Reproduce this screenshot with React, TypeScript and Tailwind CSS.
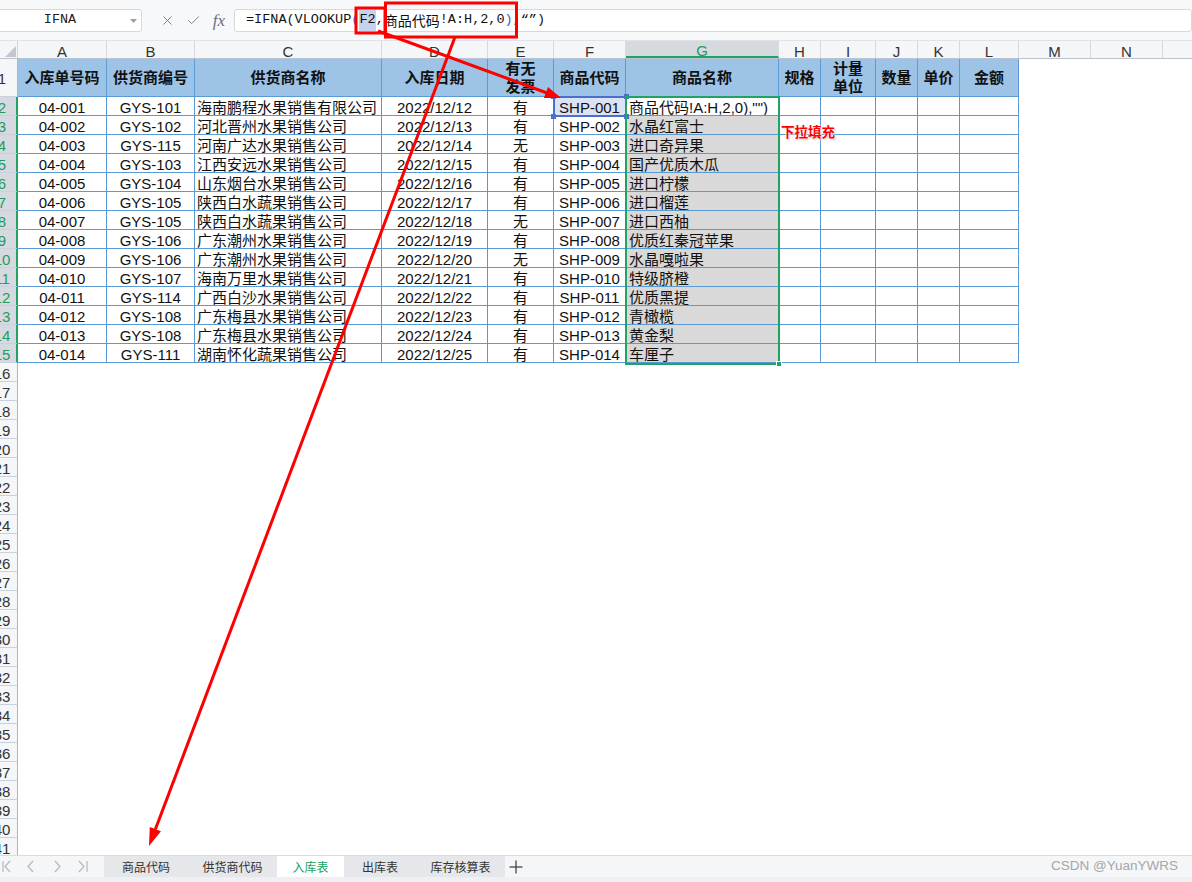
import React from 'react';
import { X, Check } from 'lucide-react';

type Col = { k: string; w: string };

const tableCols: Col[] = [
  { k: 'A', w: 'w-[89px]' },
  { k: 'B', w: 'w-[88px]' },
  { k: 'C', w: 'w-[187px]' },
  { k: 'D', w: 'w-[106px]' },
  { k: 'E', w: 'w-[66px]' },
  { k: 'F', w: 'w-[72px]' },
  { k: 'G', w: 'w-[153px]' },
  { k: 'H', w: 'w-[42px]' },
  { k: 'I', w: 'w-[55px]' },
  { k: 'J', w: 'w-[42px]' },
  { k: 'K', w: 'w-[42px]' },
  { k: 'L', w: 'w-[59px]' },
];
const extraCols: Col[] = [
  { k: 'M', w: 'w-[72px]' },
  { k: 'N', w: 'w-[72px]' },
  { k: '', w: 'w-[40px]' },
];

const headers = ['入库单号码', '供货商编号', '供货商名称', '入库日期', '有无\n发票', '商品代码', '商品名称', '规格', '计量\n单位', '数量', '单价', '金额'];

const rows: string[][] = [
  ['04-001', 'GYS-101', '海南鹏程水果销售有限公司', '2022/12/12', '有', 'SHP-001', '商品代码!A:H,2,0),"")'],
  ['04-002', 'GYS-102', '河北晋州水果销售公司', '2022/12/13', '有', 'SHP-002', '水晶红富士'],
  ['04-003', 'GYS-115', '河南广达水果销售公司', '2022/12/14', '无', 'SHP-003', '进口奇异果'],
  ['04-004', 'GYS-103', '江西安远水果销售公司', '2022/12/15', '有', 'SHP-004', '国产优质木瓜'],
  ['04-005', 'GYS-104', '山东烟台水果销售公司', '2022/12/16', '有', 'SHP-005', '进口柠檬'],
  ['04-006', 'GYS-105', '陕西白水蔬果销售公司', '2022/12/17', '有', 'SHP-006', '进口榴莲'],
  ['04-007', 'GYS-105', '陕西白水蔬果销售公司', '2022/12/18', '无', 'SHP-007', '进口西柚'],
  ['04-008', 'GYS-106', '广东潮州水果销售公司', '2022/12/19', '有', 'SHP-008', '优质红秦冠苹果'],
  ['04-009', 'GYS-106', '广东潮州水果销售公司', '2022/12/20', '无', 'SHP-009', '水晶嘎啦果'],
  ['04-010', 'GYS-107', '海南万里水果销售公司', '2022/12/21', '有', 'SHP-010', '特级脐橙'],
  ['04-011', 'GYS-114', '广西白沙水果销售公司', '2022/12/22', '有', 'SHP-011', '优质黑提'],
  ['04-012', 'GYS-108', '广东梅县水果销售公司', '2022/12/23', '有', 'SHP-012', '青橄榄'],
  ['04-013', 'GYS-108', '广东梅县水果销售公司', '2022/12/24', '有', 'SHP-013', '黄金梨'],
  ['04-014', 'GYS-111', '湖南怀化蔬果销售公司', '2022/12/25', '有', 'SHP-014', '车厘子'],
];

const emptyRows = Array.from({ length: 26 }, (_, i) => i + 16);

function RowHead({ n, sel }: { n: number; sel?: boolean }) {
  return (
    <div
      className={`w-[18px] shrink-0 h-full overflow-hidden flex items-center pt-[2px] border-b border-b-[#c9d1dc] ${
        sel
          ? 'bg-[#d6dae0] text-[#1c9d5d] border-r-2 border-r-[#21a366]'
          : 'bg-[#f5f6f8] text-[#333] border-r border-r-[#aab6c7]'
      }`}
    >
      <div className="w-[32px] shrink-0 -ml-[14px] text-center text-[15px] leading-none">{n}</div>
    </div>
  );
}

function Cell({ w, extra, children }: { w: string; extra?: string; children?: React.ReactNode }) {
  return (
    <div
      className={`${w} shrink-0 h-full border-r border-b border-[#5b9bd5] flex items-center overflow-hidden whitespace-nowrap ${extra ?? ''}`}
    >
      {children}
    </div>
  );
}

function alignFor(i: number) {
  if (i === 2) return 'justify-start pl-[2px]';
  if (i === 6) return 'justify-start pl-[3px]';
  return 'justify-center';
}

export default function App() {
  return (
    <div className="relative w-[1192px] h-[882px] overflow-hidden bg-white flex flex-col font-['Liberation_Sans','Noto_Sans_CJK_SC',sans-serif] text-[#111]">
      {/* Formula bar */}
      <div className="h-[41px] shrink-0 flex items-center bg-[#f7f8fa] border-b border-[#dfe2e6]">
        <div className="w-[146px] -ml-[4px] h-[23px] shrink-0 bg-white border border-[#d6d9de] rounded-[3px] flex items-center relative">
          <span className="flex-1 text-center font-['Liberation_Mono',monospace] text-[13.5px] text-[#222] pr-[18px]">IFNA</span>
          <svg className="absolute right-[4px] top-[9px]" width="7" height="4" viewBox="0 0 7 4">
            <polygon points="0,0 7,0 3.5,4" fill="#9aa0a8" />
          </svg>
        </div>
        <div className="flex items-center pl-[12px] text-[#6b7078]">
          <div className="w-[26px] flex justify-center"><X size={15} strokeWidth={1.4} /></div>
          <div className="w-[26px] flex justify-center"><Check size={15} strokeWidth={1.4} /></div>
          <div className="w-[26px] flex justify-center font-['Liberation_Serif',serif] italic text-[17px] leading-none">fx</div>
        </div>
        <div className="ml-[2px] flex-1 h-[23px] bg-white border border-[#d6d9de] rounded-[3px] flex items-center pl-[11px] pt-[1px] whitespace-nowrap font-['Liberation_Mono',monospace] text-[13.5px] text-[#111]">
          <span>=IFNA(VLOOKUP</span>
          <span className="text-[#2f5fd0]">(</span>
          <span className="bg-[#c5d3ef]">F2</span>
          <span>,</span>
          <span className="font-['Noto_Sans_CJK_SC',sans-serif] text-[14px]">商品代码</span>
          <span>!A:H,2,0</span>
          <span className="text-[#2f5fd0]">)</span>
          <span>,“”)</span>
        </div>
      </div>

      {/* Column headers */}
      <div className="h-[18px] shrink-0 flex bg-[#f5f6f8] border-b border-[#b9c4d3]">
        <div className="w-[18px] shrink-0 h-full border-r border-[#d3d7dc] relative">
          <svg className="absolute left-0 top-0" width="18" height="18" viewBox="0 0 18 18">
            <polygon points="5,16 16,16 16,5" fill="#c3c7cd" />
          </svg>
        </div>
        {[...tableCols, ...extraCols].map((c) => (
          <div
            key={c.k || 'x'}
            className={`${c.w} shrink-0 h-full border-r border-r-[#d6d9de] flex items-center justify-center pt-[3px] text-[15px] leading-none ${
              c.k === 'G' ? 'bg-[#d6d9de] text-[#1c9d5d] border-b-2 border-b-[#21a366]' : 'text-[#333]'
            }`}
          >
            {c.k}
          </div>
        ))}
      </div>

      {/* Sheet */}
      <div className="flex-1 min-h-0 overflow-hidden flex flex-col">
        <div className="h-[38px] shrink-0 flex">
          <RowHead n={1} />
          {tableCols.map((c, i) => (
            <Cell key={c.k} w={c.w} extra="bg-[#9dc3e6] justify-center text-center font-bold text-[15px] leading-[18px] whitespace-pre-line pt-[1px]">
              {headers[i]}
            </Cell>
          ))}
        </div>
        {rows.map((r, ri) => (
          <div key={ri} className="h-[19px] shrink-0 flex text-[15px] leading-[15px]">
            <RowHead n={ri + 2} sel />
            {tableCols.map((c, i) => {
              let bg = '';
              if (i === 5 && ri === 0) bg = 'bg-[#dce3f5]';
              if (i === 6 && ri > 0) bg = 'bg-[#d9d9d9]';
              return (
                <Cell key={c.k} w={c.w} extra={`${alignFor(i)} pt-[3px] ${bg}`}>
                  {r[i] ?? ''}
                </Cell>
              );
            })}
          </div>
        ))}
        {emptyRows.map((n) => (
          <div key={n} className="h-[19px] shrink-0 flex">
            <RowHead n={n} />
          </div>
        ))}
      </div>

      {/* Sheet tabs */}
      <div className="h-[22px] shrink-0 flex items-stretch border-t border-[#d9dce1] bg-[#f5f6f8] text-[12px] text-[#333] font-['Noto_Sans_CJK_SC',sans-serif]">
        <div className="w-[104px] shrink-0 flex items-center">
          <svg width="104" height="21" viewBox="0 0 104 21" fill="none" stroke="#b3b8c0" strokeWidth="1.2">
            <line x1="3" y1="5" x2="3" y2="16" />
            <polyline points="10,5 5,10.5 10,16" />
            <polyline points="33,5 28,10.5 33,16" />
            <polyline points="55,5 60,10.5 55,16" />
            <polyline points="79,5 84,10.5 79,16" />
            <line x1="87" y1="5" x2="87" y2="16" />
          </svg>
        </div>
        <div className="flex bg-[#e5e7ea]">
          <div className="w-[84px] flex items-center justify-center">商品代码</div>
          <div className="w-[89px] flex items-center justify-center">供货商代码</div>
          <div className="w-[67px] flex items-center justify-center bg-white text-[#17a35e]">入库表</div>
          <div className="w-[72px] flex items-center justify-center">出库表</div>
          <div className="w-[89px] flex items-center justify-center">库存核算表</div>
        </div>
        <div className="w-[22px] flex items-center justify-center">
          <svg width="14" height="14" viewBox="0 0 14 14" stroke="#444" strokeWidth="1.3">
            <line x1="7" y1="0.5" x2="7" y2="13.5" />
            <line x1="0.5" y1="7" x2="13.5" y2="7" />
          </svg>
        </div>
        <div className="flex-1" />
        <div className="flex items-center pr-[14px] text-[13.5px] text-[#a3a6ab] font-['Liberation_Sans',sans-serif]">
          CSDN @YuanYWRS
        </div>
      </div>
      <div className="h-[5px] shrink-0 bg-[#eef0f3]" />

      {/* F2 reference highlight */}
      <div className="absolute left-[553px] top-[96px] w-[74px] h-[21px] border-2 border-[#4a70cf] pointer-events-none">
        <div className="absolute -left-[4px] -top-[4px] w-[5px] h-[5px] bg-[#4a70cf]" />
        <div className="absolute -right-[4px] -top-[4px] w-[5px] h-[5px] bg-[#4a70cf]" />
        <div className="absolute -left-[4px] -bottom-[4px] w-[5px] h-[5px] bg-[#4a70cf]" />
        <div className="absolute -right-[4px] -bottom-[4px] w-[5px] h-[5px] bg-[#4a70cf]" />
      </div>

      {/* G2:G15 selection */}
      <div className="absolute left-[625px] top-[96px] w-[155px] h-[269px] border-2 border-[#21a366] pointer-events-none">
        <div className="absolute -right-[4px] -bottom-[4px] w-[6px] h-[6px] bg-[#21a366] border border-white" />
      </div>

      {/* Annotation label */}
      <div className="absolute left-[781px] top-[125px] text-[13.5px] font-bold text-[#ff0000] font-['Noto_Sans_CJK_SC',sans-serif] leading-none [text-shadow:0_0_2px_#fff,0_0_2px_#fff,1px_1px_2px_#bbb]">
        下拉填充
      </div>

      {/* Red annotations */}
      <svg className="absolute left-0 top-0 pointer-events-none" width="1192" height="882" viewBox="0 0 1192 882">
        <rect x="356" y="8" width="29" height="25" fill="none" stroke="#f00" strokeWidth="3" />
        <rect x="385.5" y="3" width="131" height="34" fill="none" stroke="#f00" strokeWidth="3" />
        <line x1="378" y1="31" x2="547" y2="93" stroke="#f00" strokeWidth="3" />
        <polygon points="561,98 548.1,86.9 543.9,98.1" fill="#f00" />
        <line x1="455" y1="37" x2="155.4" y2="829.2" stroke="#f00" strokeWidth="3" />
        <polygon points="149,846 161,831.3 149.8,827.1" fill="#f00" />
      </svg>
    </div>
  );
}
